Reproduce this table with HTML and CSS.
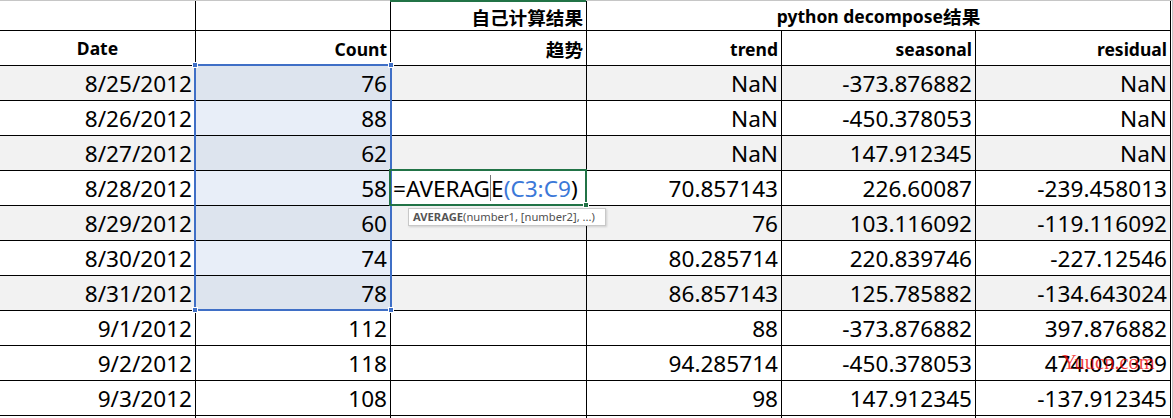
FILE: index.html
```html
<!DOCTYPE html>
<html lang="zh">
<head>
<meta charset="utf-8">
<title>Sheet</title>
<link rel="stylesheet" href="styles.css">
</head>
<body>
<div class="sheet">
  <div class="grid">
    <div class="c"></div>
    <div class="c"></div>
    <div class="c hd"><span class="cjk">自己计算结果</span></div>
    <div class="c hd span3 center">python decompose<span class="cjk">结果</span></div>

    <div class="c hd center">Date</div>
    <div class="c hd">Count</div>
    <div class="c hd"><span class="cjk">趋势</span></div>
    <div class="c hd">trend</div>
    <div class="c hd">seasonal</div>
    <div class="c hd">residual</div>

    <div class="c alt">8/25/2012</div><div class="c alt sel">76</div><div class="c alt"></div><div class="c alt">NaN</div><div class="c alt">-373.876882</div><div class="c alt">NaN</div>
    <div class="c">8/26/2012</div><div class="c sel">88</div><div class="c"></div><div class="c">NaN</div><div class="c">-450.378053</div><div class="c">NaN</div>
    <div class="c alt">8/27/2012</div><div class="c alt sel">62</div><div class="c alt"></div><div class="c alt">NaN</div><div class="c alt">147.912345</div><div class="c alt">NaN</div>
    <div class="c">8/28/2012</div><div class="c sel">58</div><div class="c formula">=AVERAG<span class="caret"></span>E<span class="ref">(C3:C9</span>)</div><div class="c">70.857143</div><div class="c">226.60087</div><div class="c">-239.458013</div>
    <div class="c alt">8/29/2012</div><div class="c alt sel">60</div><div class="c alt"></div><div class="c alt">76</div><div class="c alt">103.116092</div><div class="c alt">-119.116092</div>
    <div class="c">8/30/2012</div><div class="c sel">74</div><div class="c"></div><div class="c">80.285714</div><div class="c">220.839746</div><div class="c">-227.12546</div>
    <div class="c alt">8/31/2012</div><div class="c alt sel">78</div><div class="c alt"></div><div class="c alt">86.857143</div><div class="c alt">125.785882</div><div class="c alt">-134.643024</div>
    <div class="c">9/1/2012</div><div class="c">112</div><div class="c"></div><div class="c">88</div><div class="c">-373.876882</div><div class="c">397.876882</div>
    <div class="c">9/2/2012</div><div class="c">118</div><div class="c"></div><div class="c">94.285714</div><div class="c">-450.378053</div><div class="c">474.092339</div>
    <div class="c">9/3/2012</div><div class="c">108</div><div class="c"></div><div class="c">98</div><div class="c">147.912345</div><div class="c">-137.912345</div>

    <div class="c tail"></div><div class="c tail"></div><div class="c tail"></div><div class="c tail"></div><div class="c tail"></div><div class="c tail"></div>
  </div>

  <div class="col-mark"></div>
  <div class="selection">
    <span class="h h-tl"></span><span class="h h-tr"></span><span class="h h-bl"></span><span class="h h-br"></span>
  </div>
  <div class="active"><span class="fill-handle"></span></div>
  <div class="tooltip"><b>AVERAGE</b>(number1, [number2], ...)</div>
  <div class="watermark">Yuucn.com</div>
</div>
</body>
</html>
```

FILE: styles.css
```css
* { box-sizing: border-box; }
html, body { margin: 0; padding: 0; background: #fff; }
body {
  font-family: "Noto Sans", "Noto Sans CJK SC", sans-serif;
  color: #000;
  width: 1173px;
  height: 418px;
  overflow: hidden;
}
.sheet {
  position: relative;
  width: 1173px;
  height: 418px;
  border-top: 1px solid #c6c6c6;
  border-right: 1px solid #c6c6c6;
}
.grid {
  display: grid;
  grid-template-columns: 196px 195px 196px 195px 194px 195px;
  grid-template-rows: 30px 35px repeat(10, 35px) 4px;
}
.c {
  display: flex;
  align-items: center;
  justify-content: flex-end;
  padding: 0 3px 0 2px;
  border-right: 1px solid #000;
  border-bottom: 1px solid #000;
  font-size: 22.6px;
  white-space: nowrap;
  overflow: visible;
}
.alt { background: #f2f2f2; }
.sel { background: #e8eef8; }
.alt.sel { background: #dde4ee; }
.hd {
  font-weight: 700;
  font-size: 17.5px;
  padding-top: 1px;
}
.cjk {
  font-family: "Noto Sans CJK SC", sans-serif;
  font-size: 18.6px;
}
.span3 { grid-column: span 3; }
.center { justify-content: center; padding: 0; }
.tail { border-bottom: none; }
.formula { justify-content: flex-start; padding-left: 2px; }
.ref { color: #3b78d8; }
.caret {
  display: inline-block;
  width: 1px;
  height: 26px;
  background: #777;
}
.col-mark {
  position: absolute;
  left: 390px;
  top: -1px;
  width: 196px;
  height: 2px;
  background: #217346;
}
.selection {
  position: absolute;
  left: 194px;
  top: 63px;
  width: 198px;
  height: 247px;
  border: 2px solid #3f6fc6;
}
.h {
  position: absolute;
  width: 6px;
  height: 6px;
  background: #3f6fc6;
  border: 1px solid #fff;
}
.h-tl { left: -4px; top: -4px; }
.h-tr { right: -4px; top: -4px; }
.h-bl { left: -4px; bottom: -4px; }
.h-br { right: -4px; bottom: -4px; }
.active {
  position: absolute;
  left: 389px;
  top: 168px;
  width: 198px;
  height: 37px;
  border: 2px solid #217346;
}
.fill-handle {
  position: absolute;
  right: -4px;
  bottom: -4px;
  width: 6px;
  height: 6px;
  background: #217346;
  border: 1px solid #fff;
}
.tooltip {
  position: absolute;
  left: 408px;
  top: 207px;
  width: 198px;
  height: 18px;
  padding: 0 0 0 4px;
  background: #fff;
  border: 1px solid #c8c8c8;
  box-shadow: 1px 1px 2px rgba(0,0,0,0.15);
  font-family: "Noto Sans", sans-serif;
  font-size: 11.2px;
  line-height: 16px;
  color: #505050;
  white-space: nowrap;
}
.tooltip b { font-weight: 700; color: #555; }
.watermark {
  position: absolute;
  left: 1062px;
  top: 350px;
  font-family: "Liberation Serif", serif;
  font-size: 20.5px;
  color: rgba(240, 0, 0, 0.75);
  white-space: nowrap;
}
```
